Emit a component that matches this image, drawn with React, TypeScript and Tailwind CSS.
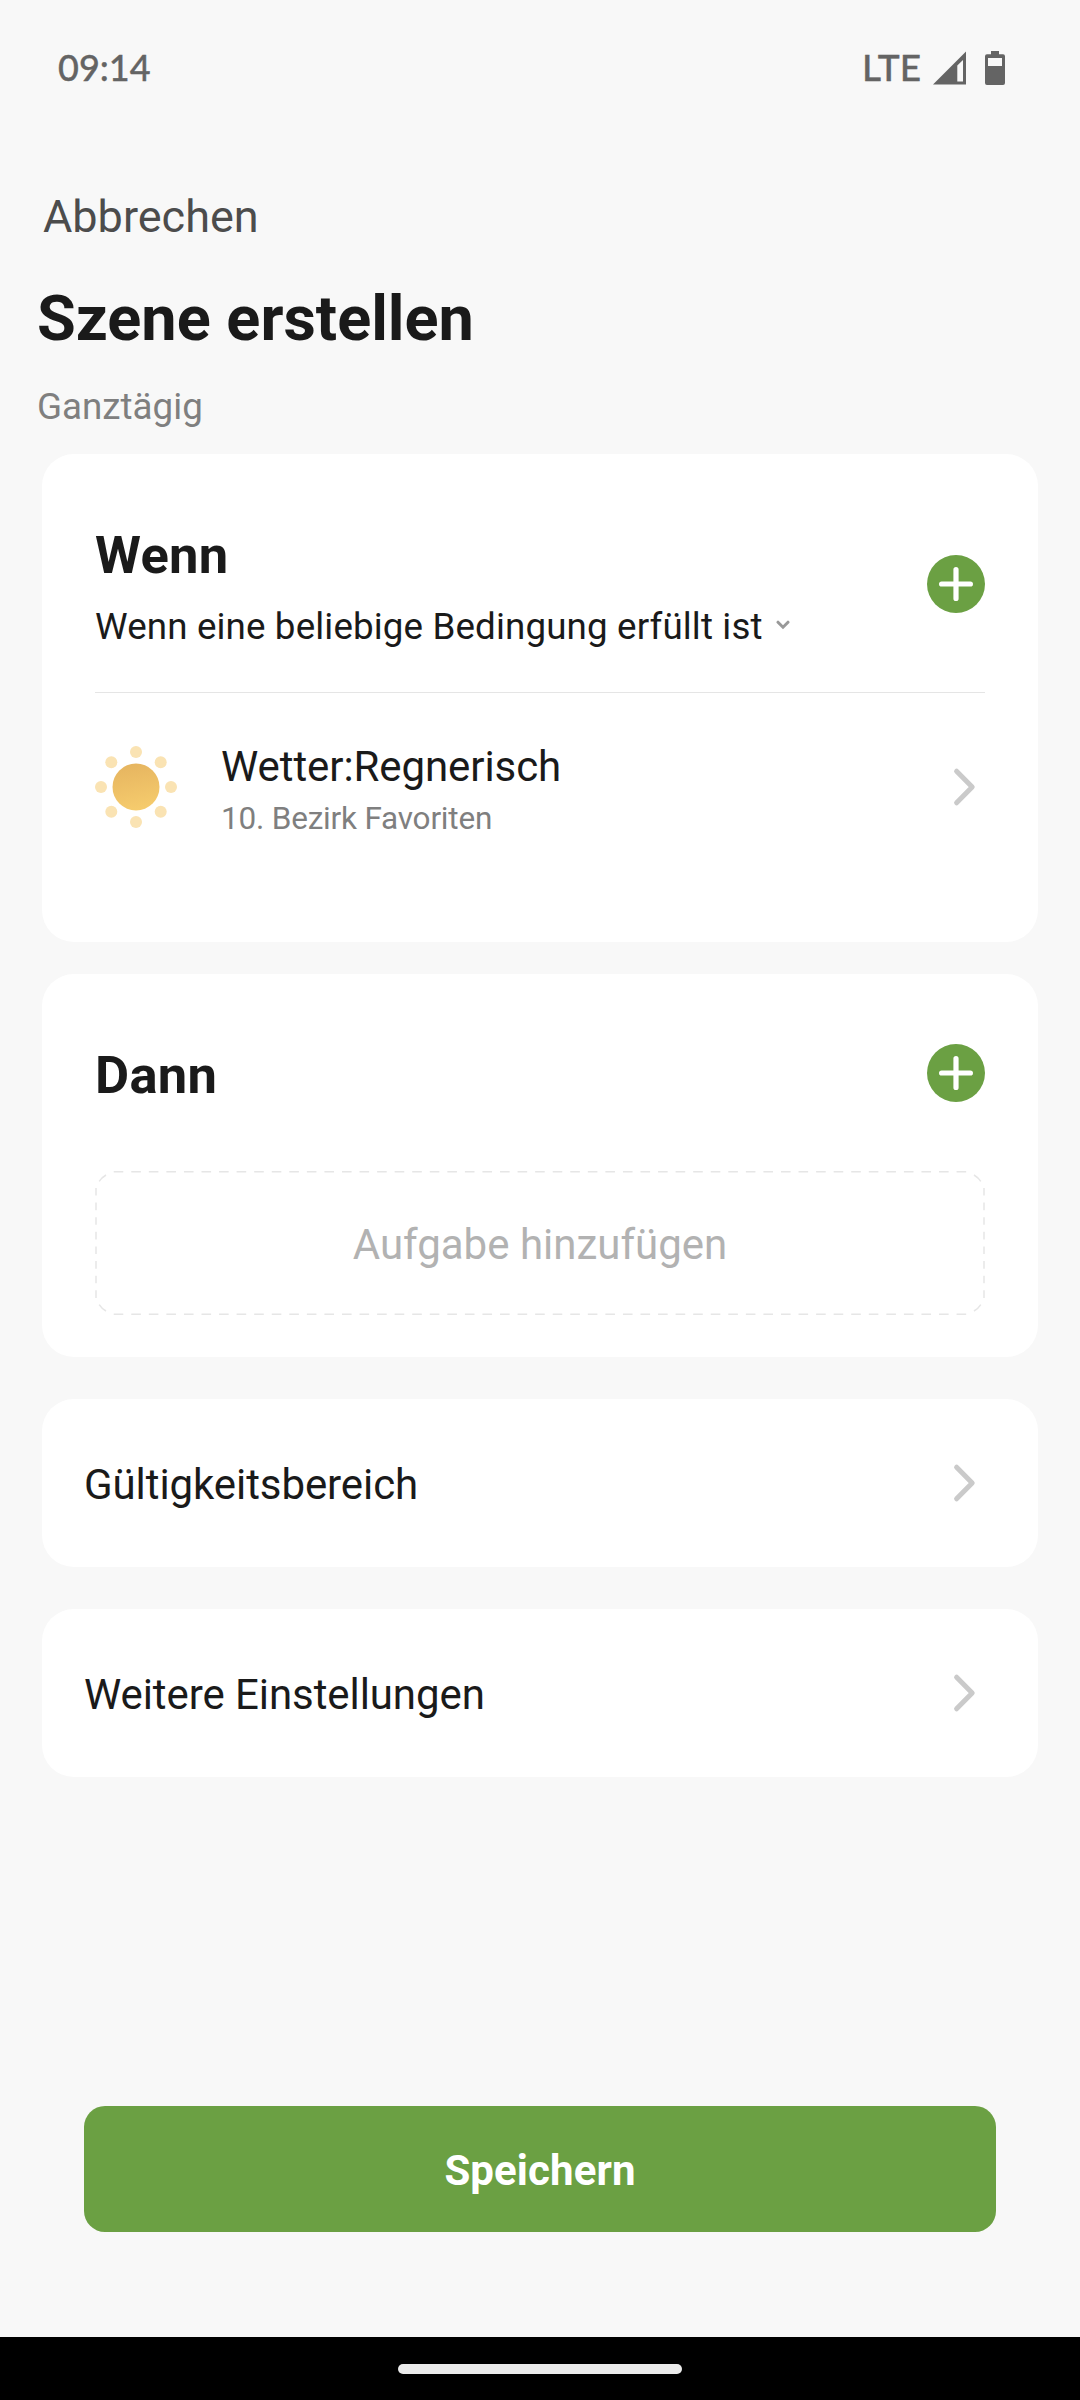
import React from "react";

const ChevronRight = () => (
  <svg className="w-[24px] h-[40px]" viewBox="0 0 24 40" fill="none">
    <path
      d="M4.6 4.2 L20.2 20 L4.6 35.8"
      stroke="#cacaca"
      strokeWidth="5"
      strokeLinecap="round"
      strokeLinejoin="round"
    />
  </svg>
);

const AddButton = () => (
  <button className="w-[58px] h-[58px] rounded-full bg-[#6ba043]">
    <svg className="w-[58px] h-[58px]" viewBox="0 0 58 58">
      <path d="M29 14.6 V43.4 M14.6 29 H43.4" stroke="#fff" strokeWidth="5.2" strokeLinecap="round" />
    </svg>
  </button>
);

const SunIcon = () => (
  <svg className="w-[84px] h-[84px]" viewBox="0 0 84 84">
    <defs>
      <linearGradient id="sun" x1="0.4" y1="0" x2="0.6" y2="1">
        <stop offset="0" stopColor="#e6b560" />
        <stop offset="1" stopColor="#f6cc6d" />
      </linearGradient>
    </defs>
    <circle cx="42" cy="42" r="23.5" fill="url(#sun)" />
    <g fill="#fae3b3">
      <circle cx="42" cy="7" r="6" />
      <circle cx="42" cy="77" r="6" />
      <circle cx="7" cy="42" r="6" />
      <circle cx="77" cy="42" r="6" />
      <circle cx="17.3" cy="17.3" r="6" />
      <circle cx="66.7" cy="17.3" r="6" />
      <circle cx="17.3" cy="66.7" r="6" />
      <circle cx="66.7" cy="66.7" r="6" />
    </g>
  </svg>
);

const DashedOutline = () => (
  <svg className="absolute inset-0 w-full h-full" viewBox="0 0 890 144" fill="none" stroke="#e6e6e6" strokeWidth="1.5">
    <path d="M18.7 0.8 H872 M18.7 143.2 H872" strokeDasharray="9.6 7.96" />
    <path d="M1 17 V127.3 M889 17 V127.3" strokeDasharray="7.6 7.02" />
    <path d="M4.2 10.4 Q6.6 6.6 11 4 M885.8 10.4 Q883.4 6.6 879 4 M4.2 133.6 Q6.6 137.4 11 140 M885.8 133.6 Q883.4 137.4 879 140" />
  </svg>
);

const SettingsRow = ({ label }: { label: string }) => (
  <button className="w-full h-[168px] bg-white rounded-[32px] pl-[42px] pr-[62px] flex items-center justify-between">
    <span className="text-[42px] leading-[52px] tracking-[-0.08px] mt-[3px]">{label}</span>
    <ChevronRight />
  </button>
);

const App = () => {
  return (
    <div className="w-[1080px] h-[2400px] flex flex-col bg-[#f8f8f8] text-[#1a1a1a] font-['Roboto',sans-serif] overflow-hidden">
      {/* Status Bar */}
      <div className="h-[136px] pl-[58px] pr-[75px] flex items-center justify-between text-[#646464] font-['Lato',sans-serif] font-medium [-webkit-text-stroke:0.35px_#646464]">
        <span className="text-[36px] leading-[44px] mb-[2px]">09:14</span>
        <div className="flex items-center">
          <span className="text-[37px] leading-[44px] mb-[3px]">LTE</span>
          <svg className="w-[33px] h-[34px] ml-[12px]" viewBox="0 0 33 34">
            <path d="M33 0.5 V33.5 H0 Z M30 9 L24.3 14.5 V30.5 H30 Z" fill="#646464" fillRule="evenodd" />
          </svg>
          <svg className="w-[20px] h-[34px] ml-[19px]" viewBox="0 0 20 34">
            <path
              d="M6 0 H14 V3.3 H18 Q20 3.3 20 5.3 V32 Q20 34 18 34 H2 Q0 34 0 32 V5.3 Q0 3.3 2 3.3 H6 Z M3 7 V15 H17 V7 Z"
              fill="#646464"
              fillRule="evenodd"
            />
          </svg>
        </div>
      </div>

      {/* Header */}
      <header className="pt-[51px] pl-[37px] flex flex-col items-start">
        <button className="ml-[6px] text-[45px] leading-[60px] text-[#4c4c4c]">Abbrechen</button>
        <h1 className="mt-[34px] text-[63px] leading-[76px] font-bold">Szene erstellen</h1>
        <p className="mt-[28px] text-[36.75px] leading-[44px] text-[#7f7f7f]">Ganztägig</p>
      </header>

      <main className="mt-[25px] px-[42px]">
        {/* Conditions */}
        <section className="h-[488px] bg-white rounded-[32px] px-[53px] pt-[71px]">
          <div className="h-[168px] border-b border-[#e5e5e5] flex justify-between">
            <div>
              <h2 className="text-[52.5px] leading-[60px] tracking-[0.3px] font-bold">Wenn</h2>
              <button className="mt-[20px] flex items-center">
                <span className="text-[36.75px] leading-[44px] tracking-[0.13px]">
                  Wenn eine beliebige Bedingung erfüllt ist
                </span>
                <svg className="w-[14px] h-[10px] ml-[13px] mb-[5px]" viewBox="0 0 14 10" fill="none">
                  <path d="M2 2.2 L7 7.2 L12 2.2" stroke="#999" strokeWidth="3" strokeLinecap="round" />
                </svg>
              </button>
            </div>
            <div className="pt-[30px]">
              <AddButton />
            </div>
          </div>
          <div className="-ml-px pt-[42px] pr-[9px] flex items-center">
            <SunIcon />
            <div className="ml-[43px] pt-[6px] flex-1">
              <p className="text-[42px] leading-[52px] tracking-[-0.08px]">Wetter:Regnerisch</p>
              <p className="text-[31.5px] leading-[40px] tracking-[-0.2px] mt-[6px] text-[#7f7f7f]">10. Bezirk Favoriten</p>
            </div>
            <ChevronRight />
          </div>
        </section>

        {/* Actions */}
        <section className="mt-[32px] h-[383px] bg-white rounded-[32px] px-[53px] pt-[70px]">
          <div className="flex items-center justify-between h-[58px]">
            <h2 className="text-[52.5px] leading-[60px] tracking-[0.3px] font-bold mt-[3px]">Dann</h2>
            <AddButton />
          </div>
          <button className="relative mt-[69px] w-full h-[144px] pt-[4px] flex items-center justify-center">
            <DashedOutline />
            <span className="text-[42px] leading-[52px] text-[#b2b2b2]">Aufgabe hinzufügen</span>
          </button>
        </section>

        <div className="mt-[42px] flex flex-col gap-[42px]">
          <SettingsRow label="Gültigkeitsbereich" />
          <SettingsRow label="Weitere Einstellungen" />
        </div>
      </main>

      {/* Save Button */}
      <div className="mt-auto px-[84px] pb-[105px]">
        <button className="w-full h-[126px] pt-[3px] rounded-[21px] bg-[#6ba043] text-white text-[42px] leading-[52px] tracking-[0.1px] font-bold">
          Speichern
        </button>
      </div>

      {/* Navigation Bar */}
      <div className="h-[63px] shrink-0 bg-black flex justify-center pt-[27px]">
        <div className="w-[284px] h-[10px] rounded-full bg-[#ebebeb]" />
      </div>
    </div>
  );
};

export default App;
